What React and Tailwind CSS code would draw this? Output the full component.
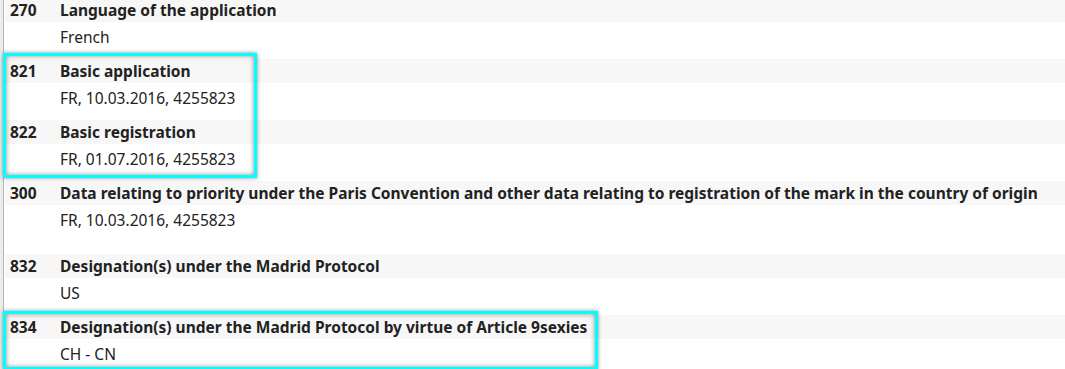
import React from "react";

const entries = [
  { code: "270", title: "Language of the application", value: "French" },
  { code: "821", title: "Basic application", value: "FR, 10.03.2016, 4255823" },
  { code: "822", title: "Basic registration", value: "FR, 01.07.2016, 4255823" },
  {
    code: "300",
    title:
      "Data relating to priority under the Paris Convention and other data relating to registration of the mark in the country of origin",
    value: "FR, 10.03.2016, 4255823",
    tall: true,
  },
  { code: "832", title: "Designation(s) under the Madrid Protocol", value: "US" },
  {
    code: "834",
    title: "Designation(s) under the Madrid Protocol by virtue of Article 9sexies",
    value: "CH - CN",
  },
];

function Entry({ code, title, value, tall }) {
  return (
    <div>
      <div className="flex h-[24px] items-center bg-[#f7f7f7] text-[15.5px] leading-[20px] font-bold text-[#222]">
        <span className="w-[55px] pl-[5px]">{code}</span>
        <span>{title}</span>
      </div>
      <div
        className={`pl-[55px] pt-[4px] text-[15.5px] leading-[22px] text-[#222] ${
          tall ? "h-[49px]" : "h-[37px]"
        }`}
      >
        {value}
      </div>
    </div>
  );
}

export default function App() {
  return (
    <div
      className="relative h-[369px] w-[1065px] overflow-hidden bg-white"
      style={{ fontFamily: '"Noto Sans", "Open Sans", sans-serif' }}
    >
      <div className="flex h-full">
        <div className="w-[3px] bg-[#ececec]" />
        <div className="w-[1px] bg-[#b5b5b5]" />
        <div className="w-[1px] bg-white" />
        <div className="-mt-[2px] flex-1">
          {entries.map((e) => (
            <Entry key={e.code} {...e} />
          ))}
        </div>
      </div>

      {/* highlight frames */}
      <div className="pointer-events-none absolute left-[3px] top-[53px] h-[125px] w-[254px] border-[3px] border-[#00ffff] shadow-[0_0_4px_rgba(0,0,0,0.45),inset_0_0_5px_rgba(0,0,0,0.45)]" />
      <div className="pointer-events-none absolute left-[3px] top-[311px] h-[59px] w-[595px] border-[3px] border-[#00ffff] shadow-[0_0_4px_rgba(0,0,0,0.45),inset_0_0_5px_rgba(0,0,0,0.45)]" />
    </div>
  );
}
